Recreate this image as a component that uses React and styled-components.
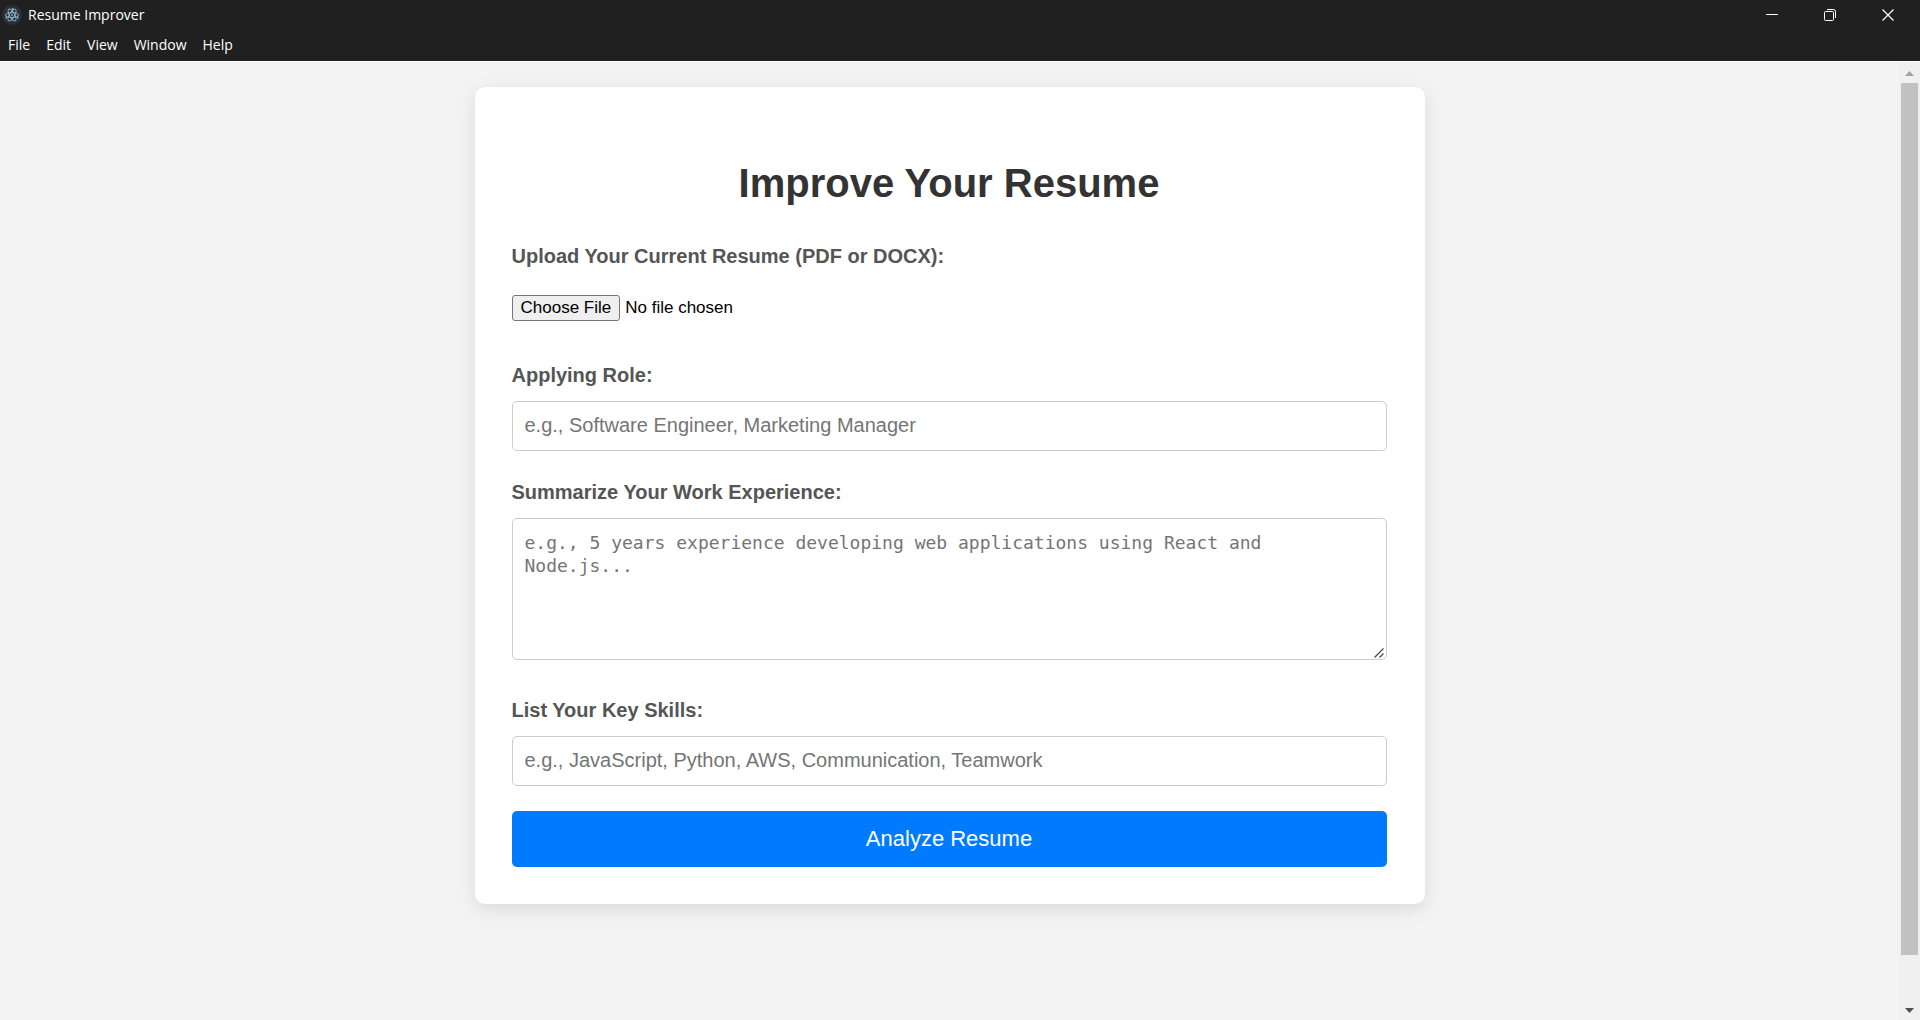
import React from "react";
import styled, { createGlobalStyle } from "styled-components";

const GlobalStyle = createGlobalStyle`
  *, *::before, *::after { box-sizing: border-box; }
  body { margin: 0; background: #f3f3f3; }
`;

const sans = `Arial, "Liberation Sans", sans-serif`;

const Window = styled.div`
  display: flex;
  flex-direction: column;
  height: 100vh;
  font-family: ${sans};
`;

const Chrome = styled.header`
  flex: none;
  background: #202020;
  color: #fff;
  border-bottom: 1px solid #fff;
  font-family: "Segoe UI", "Open Sans", sans-serif;
  font-size: 14px;
`;

const TitleBar = styled.div`
  display: flex;
  align-items: center;
  height: 29px;
  padding: 0 3px 0 2px;
`;

const AppIcon = styled.svg`
  width: 20px;
  height: 20px;
  margin-right: 6px;
`;

const WindowTitle = styled.span`
  flex: 1;
  line-height: 20px;
`;

const WindowButton = styled.button`
  display: flex;
  align-items: center;
  justify-content: center;
  width: 58px;
  height: 28px;
  padding: 0;
  border: 0;
  background: transparent;
  color: #fff;
`;

const MenuBar = styled.nav`
  display: flex;
  height: 32px;
`;

const MenuButton = styled.button`
  height: 30px;
  padding: 0 8px;
  border: 0;
  background: transparent;
  color: #fff;
  font: inherit;
`;

const Viewport = styled.div`
  display: flex;
  flex: 1;
  min-height: 0;
`;

const Page = styled.main`
  flex: 1;
  min-width: 0;
  padding: 25px;
  overflow: hidden;
`;

const Card = styled.form`
  max-width: 950px;
  margin: 0 auto;
  padding: 37px 38px 37px 37px;
  border-radius: 10px;
  background: #fff;
  box-shadow: 0 5px 18px rgba(0, 0, 0, 0.1);
`;

const Heading = styled.h1`
  margin: 27px 0 25px;
  color: #333;
  font-size: 40px;
  line-height: 64px;
  text-align: center;
`;

const Field = styled.div`
  margin-bottom: 25px;
`;

const Label = styled.label`
  display: block;
  margin-bottom: 10px;
  color: #555;
  font-size: 20px;
  font-weight: bold;
  line-height: 32px;
`;

const FileInput = styled.input`
  display: block;
  width: 100%;
  padding: 13px 0;
  color: #000;
  font-family: ${sans};
  font-size: 17px;
  line-height: 20px;

  &::file-selector-button {
    height: 26px;
    margin: 0 5px 0 0;
    padding: 0 8px;
    border: 1px solid #767676;
    border-radius: 3px;
    background: #efefef;
    color: #000;
    font: inherit;
  }
`;

const TextInput = styled.input`
  display: block;
  width: 100%;
  height: 50px;
  padding: 11px 12px 13px;
  border: 1px solid #ccc;
  border-radius: 5px;
  font-family: ${sans};
  font-size: 20px;

  &::placeholder { color: #757575; }
`;

const TextAreaFrame = styled.div`
  position: relative;
  margin-bottom: 34px;
`;

const TextArea = styled.textarea`
  display: block;
  width: 100%;
  height: 142px;
  padding: 12px;
  border: 1px solid #ccc;
  border-radius: 5px;
  font-family: Consolas, "DejaVu Sans Mono", monospace;
  font-size: 18px;
  line-height: 23px;
  resize: vertical;

  &::placeholder { color: #757575; }
  &::-webkit-resizer { background: transparent; }
`;

const ResizeGrip = styled.svg`
  position: absolute;
  right: 3px;
  bottom: 2px;
  width: 10px;
  height: 10px;
  pointer-events: none;
`;

const SubmitButton = styled.button`
  display: block;
  width: 100%;
  height: 56px;
  border: 0;
  border-radius: 5px;
  background: #007bff;
  color: #fff;
  font-family: ${sans};
  font-size: 22px;
`;

const ScrollBar = styled.aside`
  display: flex;
  flex-direction: column;
  width: 21px;
  background: #f0f0f0;
`;

const ScrollButton = styled.button`
  display: flex;
  align-items: center;
  justify-content: center;
  height: 21px;
  padding: 2px 0 0;
  border: 0;
  background: transparent;
  color: ${(p) => (p.$dim ? "#a3a3a3" : "#505050")};
`;

const ScrollThumb = styled.div`
  flex: 20;
  margin: 0 2px;
  background: #c1c1c1;
`;

const ScrollRest = styled.div`
  flex: 1;
`;

const menus = ["File", "Edit", "View", "Window", "Help"];

function ElectronIcon() {
  return (
    <AppIcon viewBox="0 0 20 20" aria-hidden="true">
      <circle cx="10" cy="10" r="10" fill="#2b2e3b" />
      <g fill="none" stroke="#8fb8c4" strokeWidth="0.9">
        <ellipse cx="10" cy="10" rx="6.6" ry="2.5" />
        <ellipse cx="10" cy="10" rx="6.6" ry="2.5" transform="rotate(60 10 10)" />
        <ellipse cx="10" cy="10" rx="6.6" ry="2.5" transform="rotate(120 10 10)" />
      </g>
      <g fill="#8fb8c4">
        <circle cx="10" cy="10" r="0.9" />
        <circle cx="4.300" cy="12.500" r="1" />
        <circle cx="15.700" cy="12.500" r="1" />
        <circle cx="10.800" cy="4" r="1" />
      </g>
    </AppIcon>
  );
}

export default function App() {
  return (
    <Window>
      <GlobalStyle />
      <Chrome>
        <TitleBar>
          <ElectronIcon />
          <WindowTitle>Resume Improver</WindowTitle>
          <WindowButton aria-label="Minimize">
            <svg width="12" height="12" shapeRendering="crispEdges"><path d="M0 5.5h12" stroke="currentColor" /></svg>
          </WindowButton>
          <WindowButton aria-label="Restore">
            <svg width="12" height="12" fill="none" stroke="currentColor">
              <rect x="0.5" y="2.5" width="9" height="9" rx="1" />
              <path d="M3 0.5h6.5a2 2 0 0 1 2 2V9" />
            </svg>
          </WindowButton>
          <WindowButton aria-label="Close">
            <svg width="12" height="12"><path d="M0.5 0.5l11 11M11.5 0.5l-11 11" stroke="currentColor" strokeWidth="1.2" /></svg>
          </WindowButton>
        </TitleBar>
        <MenuBar>
          {menus.map((m) => <MenuButton key={m}>{m}</MenuButton>)}
        </MenuBar>
      </Chrome>
      <Viewport>
        <Page>
          <Card onSubmit={(e) => e.preventDefault()}>
            <Heading>Improve Your Resume</Heading>
            <Field>
              <Label htmlFor="resume">Upload Your Current Resume (PDF or DOCX):</Label>
              <FileInput id="resume" type="file" accept=".pdf,.docx" />
            </Field>
            <Field>
              <Label htmlFor="role">Applying Role:</Label>
              <TextInput id="role" type="text" placeholder="e.g., Software Engineer, Marketing Manager" />
            </Field>
            <Field>
              <Label htmlFor="experience">Summarize Your Work Experience:</Label>
              <TextAreaFrame>
                <TextArea id="experience" placeholder="e.g., 5 years experience developing web applications using React and Node.js..." />
                <ResizeGrip viewBox="0 0 10 10" aria-hidden="true">
                  <path d="M0.500 9.500L9.500 0.500M5.500 9.500L9.500 5.500" stroke="#505050" strokeWidth="1.400" />
                </ResizeGrip>
              </TextAreaFrame>
            </Field>
            <Field>
              <Label htmlFor="skills">List Your Key Skills:</Label>
              <TextInput id="skills" type="text" placeholder="e.g., JavaScript, Python, AWS, Communication, Teamwork" />
            </Field>
            <SubmitButton type="submit">Analyze Resume</SubmitButton>
          </Card>
        </Page>
        <ScrollBar>
          <ScrollButton $dim aria-label="Scroll up">
            <svg width="9" height="5"><path d="M0 5L4.500 0L9 5z" fill="currentColor" /></svg>
          </ScrollButton>
          <ScrollThumb />
          <ScrollRest />
          <ScrollButton aria-label="Scroll down">
            <svg width="9" height="5"><path d="M0 0L4.500 5L9 0z" fill="currentColor" /></svg>
          </ScrollButton>
        </ScrollBar>
      </Viewport>
    </Window>
  );
}
